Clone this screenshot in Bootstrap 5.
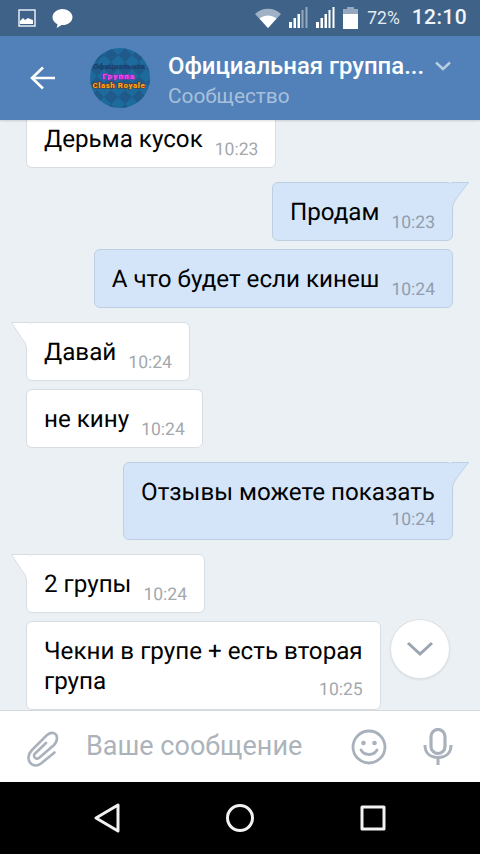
<!DOCTYPE html>
<html lang="ru">
<head>
    <meta charset="UTF-8">
    <title>Официальная группа</title>
    <link href="https://cdn.jsdelivr.net/npm/bootstrap@5.3.3/dist/css/bootstrap.min.css" rel="stylesheet">
    <style>
        html, body { height: 100%; }
        body { font-family: Roboto, "Liberation Sans", sans-serif; background: #ebf0f5; overflow: hidden; }
        .phone { width: 480px; height: 854px; }
        .status-bar { height: 36px; background: #3f6288; color: #fff; padding: 0 13px 0 18px; }
        .status-pct { font-size: 17.5px; margin-left: 9px; color: #e4ebf2; }
        .status-time { font-size: 21px; font-weight: 500; margin-left: 12px; letter-spacing: .4px; color: #f2f5f8; }
        .top-bar { height: 84px; background: #5181b8; box-shadow: 0 1px 2px rgba(0,0,0,.15); z-index: 2; }
        .back-btn { width: 90px; padding-left: 30px; }
        .avatar-svg { width: 60px; height: 60px; flex: none; }
        .avatar-text { font-family: Roboto, sans-serif; font-weight: 900; text-anchor: middle; paint-order: stroke; }
        .avatar-line1 { font-size: 8px; fill: #1b3f70; }
        .avatar-line2 { font-size: 8px; letter-spacing: 1.2px; fill: #f04bf0; stroke: #a01fb0; stroke-width: 1px; }
        .avatar-line3 { font-size: 8px; letter-spacing: .5px; fill: #f5a623; stroke: #6b2c0c; stroke-width: 1px; }
        .chat-head { margin-left: 18px; padding-top: 4px; }
        .chat-title { font-size: 23.9px; font-weight: 500; color: #fff; line-height: 28px; }
        .chat-sub { font-size: 20.8px; color: #a8c0db; line-height: 26px; margin-top: 3px; }
        .title-chevron { margin-left: 11px; }
        .messages { flex: 1 1 0; min-height: 0; overflow: hidden; background: #ebf0f5; padding: 0 27px 0 26px; }
        .bubble { position: relative; font-size: 24.2px; line-height: 30px; color: #000; border: 1px solid #d8dde3; border-radius: 6px; padding: 14px 17px 13px 17px; max-width: 365px; text-rendering: geometricPrecision; }
        .bubble-in { background: #fff; align-self: flex-start; }
        .bubble-out { background: #d5e5f9; border-color: #bfcfe2; align-self: flex-end; }
        .msg-time { font-size: 17.5px; line-height: 20px; color: #a3a8ad; white-space: nowrap; }
        .bubble-out .msg-time { color: #8f9dad; }
        .inline-time { margin-left: 12px; position: relative; top: 7.5px; }
        .row-time { margin-left: 12px; position: relative; top: 4px; }
        .block-time { display: block; text-align: right; margin-top: 3px; margin-bottom: -4px; }
        .tail { position: absolute; top: -1px; width: 18px; height: 28px; }
        .tail-in { left: -16px; fill: #fff; stroke: #d8dde3; }
        .tail-out { right: -17px; fill: #d5e5f9; stroke: #bfcfe2; }
        .group-gap { margin-top: 14px; }
        .same-gap { margin-top: 8px; }
        .scroll-down { position: absolute; right: 30px; bottom: 175px; width: 60px; height: 60px; border-radius: 50%; background: #fff; border: 1px solid #dde2e7; box-shadow: 0 1px 2px rgba(0,0,0,.08); }
        .input-bar { height: 72px; background: #fff; border-top: 1px solid #d3d8dd; padding: 0 27px 0 15px; z-index: 1; }
        .input-hint { font-size: 27px; color: #adb3ba; margin-left: 11px; }
        .mic-icon { margin-left: 36px; }
        .nav-bar { height: 72px; background: #000; padding: 0 94px; }
    </style>
</head>
<body>

<div class="phone d-flex flex-column position-relative">
    <div class="status-bar d-flex align-items-center">
        <svg width="18" height="18" viewBox="0 0 18 18"><rect x="1" y="1" width="16" height="16" fill="none" stroke="#e8edf3" stroke-width="1.5"/><path d="M2 15v-3l3-3 2 2 3-2 2 1 3 1v4z" fill="#fff"/></svg>
        <svg class="ms-3" width="21" height="21" viewBox="0 0 21 21"><path d="M10.5 1C5 1 .5 4.700 .5 9.200c0 3 2 5.600 5 7l-.8 3.800 5-3h.8c5.500 0 10-3.400 10-7.800S16 1 10.500 1z" fill="#fff"/></svg>
        <span class="ms-auto d-flex align-items-center">
            <svg width="26" height="20" viewBox="0 0 26 20"><path d="M0 6C7-1 19-1 26 6L13 20z" fill="#fff" opacity=".5"/><path d="M4.500 10.500C10 6.500 16 6.500 21.500 10.500L13 20z" fill="#fff"/></svg>
            <svg class="ms-2" width="19" height="22" viewBox="0 0 19 22" fill="#fff"><rect x="0" y="15" width="3" height="6"/><rect x="4.500" y="11" width="2.500" height="10"/><rect x="8.500" y="7" width="2.500" height="14"/><rect x="12.500" y="3" width="2" height="18" opacity=".45"/><rect x="16.500" y="0" width="2" height="21" opacity=".45"/></svg>
            <svg class="ms-2" width="19" height="22" viewBox="0 0 19 22" fill="#fff"><rect x="0" y="15" width="3" height="6"/><rect x="4.500" y="11" width="2.500" height="10"/><rect x="8.500" y="7" width="2.500" height="14"/><rect x="12.500" y="3" width="2" height="18"/><rect x="16.500" y="0" width="2" height="21"/></svg>
            <svg class="ms-2" width="15" height="22" viewBox="0 0 15 22"><path d="M4 0h7v2h4v20H0V2h4z" fill="#fff" opacity=".45"/><rect y="7" width="15" height="15" fill="#fff"/></svg>
            <span class="status-pct">72%</span>
            <span class="status-time">12:10</span>
        </span>
    </div>

    <div class="top-bar d-flex align-items-center position-relative">
        <div class="back-btn">
            <svg width="26" height="24" viewBox="0 0 26 24" fill="none" stroke="#fff" stroke-width="2.600"><path d="M25 12H2M13 1.500 2 12l11 10.500"/></svg>
        </div>
        <svg class="avatar-svg" viewBox="0 0 60 60">
            <defs>
                <clipPath id="avatarClip"><circle cx="30" cy="30" r="30"/></clipPath>
                <pattern id="avatarDiamonds" width="14" height="14" patternUnits="userSpaceOnUse"><path d="M7 0l7 7-7 7-7-7z" fill="#205a8a"/></pattern>
            </defs>
            <g clip-path="url(#avatarClip)">
                <rect width="60" height="60" fill="#1d6a9c"/>
                <rect width="60" height="60" fill="url(#avatarDiamonds)"/>
                <text class="avatar-text avatar-line1" x="29" y="21">Официальная</text>
                <text class="avatar-text avatar-line2" x="29" y="30.500">Группа</text>
                <text class="avatar-text avatar-line3" x="29" y="40">Clash Royale</text>
            </g>
        </svg>
        <div class="chat-head flex-grow-1">
            <div class="d-flex align-items-center">
                <div class="chat-title">Официальная группа...</div>
                <svg class="title-chevron" width="16" height="10" viewBox="0 0 16 10" fill="none" stroke="#b9cde3" stroke-width="2.400"><path d="M1 1.500 8 8l7-6.500"/></svg>
            </div>
            <div class="chat-sub">Сообщество</div>
        </div>
    </div>

    <div class="messages d-flex flex-column justify-content-end">
        <div class="bubble bubble-in">Дерьма кусок<span class="msg-time inline-time">10:23</span></div>
        <div class="bubble bubble-out group-gap">Продам<span class="msg-time inline-time">10:23</span>
            <svg class="tail tail-out" viewBox="0 0 18 28"><path d="M0 .5H17.500L5 17C3 20 1.500 23 1.500 28H0z" stroke="none"/><path d="M0 .5H17.500L5 17C3 20 1.500 23 1.500 28" fill="none"/></svg>
        </div>
        <div class="bubble bubble-out same-gap">А что будет если кинеш<span class="msg-time inline-time">10:24</span></div>
        <div class="bubble bubble-in group-gap">Давай<span class="msg-time inline-time">10:24</span>
            <svg class="tail tail-in" viewBox="0 0 18 28"><path d="M18 .5H.5L10.500 16C13 19 15.500 22 15.500 28H18z" stroke="none"/><path d="M18 .5H.5L10.500 16C13 19 15.500 22 15.500 28" fill="none"/></svg>
        </div>
        <div class="bubble bubble-in same-gap">не кину<span class="msg-time inline-time">10:24</span></div>
        <div class="bubble bubble-out group-gap">Отзывы можете показать<span class="msg-time block-time">10:24</span>
            <svg class="tail tail-out" viewBox="0 0 18 28"><path d="M0 .5H17.500L5 17C3 20 1.500 23 1.500 28H0z" stroke="none"/><path d="M0 .5H17.500L5 17C3 20 1.500 23 1.500 28" fill="none"/></svg>
        </div>
        <div class="bubble bubble-in group-gap">2 групы<span class="msg-time inline-time">10:24</span>
            <svg class="tail tail-in" viewBox="0 0 18 28"><path d="M18 .5H.5L10.500 16C13 19 15.500 22 15.500 28H18z" stroke="none"/><path d="M18 .5H.5L10.500 16C13 19 15.500 22 15.500 28" fill="none"/></svg>
        </div>
        <div class="bubble bubble-in same-gap">Чекни в групе + есть вторая
            <div class="d-flex justify-content-between align-items-end">група<span class="msg-time row-time">10:25</span></div>
        </div>
    </div>

    <div class="scroll-down d-flex align-items-center justify-content-center">
        <svg width="28" height="16" viewBox="0 0 28 16" fill="none" stroke="#9aa5b1" stroke-width="3"><path d="M2 2l12 11L26 2"/></svg>
    </div>

    <div class="input-bar d-flex align-items-center position-relative">
        <svg width="60" height="50" viewBox="0 0 60 50" fill="none" stroke="#a8b1bc" stroke-width="2.600" stroke-linecap="round"><path d="M39.500 30.500 26 41.500C20 46 13 42 13.500 35 13.800 32 15 30 17 28L32 13C37 9 42 11 42 16 42 19 41 21 39 23L24 36C21 38 18 35 19.500 32L31 21"/></svg>
        <span class="input-hint">Ваше сообщение</span>
        <svg class="ms-auto" width="36" height="36" viewBox="0 0 36 36" fill="none" stroke="#a8b1bc" stroke-width="2.800"><circle cx="18" cy="18" r="16"/><path d="M10 21c3.500 6 12.500 6 16 0" stroke-linecap="round"/><circle cx="12.500" cy="14" r="2.300" fill="#a8b1bc" stroke="none"/><circle cx="23.500" cy="14" r="2.300" fill="#a8b1bc" stroke="none"/></svg>
        <svg class="mic-icon" width="30" height="38" viewBox="0 0 30 38"><rect x="8" y="1.500" width="14" height="24" rx="7" fill="none" stroke="#a8b1bc" stroke-width="3.200"/><path d="M2 17c0 8 5 12.500 13 12.500S28 25 28 17" fill="none" stroke="#a8b1bc" stroke-width="3"/><path d="M15 29v8" stroke="#a8b1bc" stroke-width="3"/></svg>
    </div>

    <div class="nav-bar d-flex align-items-center justify-content-between">
        <svg width="26" height="30" viewBox="0 0 26 30" fill="none" stroke="#f2f2f2" stroke-width="3" stroke-linejoin="round"><path d="M24 2v26L2 15z"/></svg>
        <svg width="30" height="30" viewBox="0 0 30 30" fill="none" stroke="#f2f2f2" stroke-width="3"><circle cx="15" cy="15" r="12.500"/></svg>
        <svg width="26" height="26" viewBox="0 0 26 26" fill="none" stroke="#f2f2f2" stroke-width="3" stroke-linejoin="round"><rect x="2" y="2" width="22" height="22"/></svg>
    </div>
</div>

</body>
</html>
